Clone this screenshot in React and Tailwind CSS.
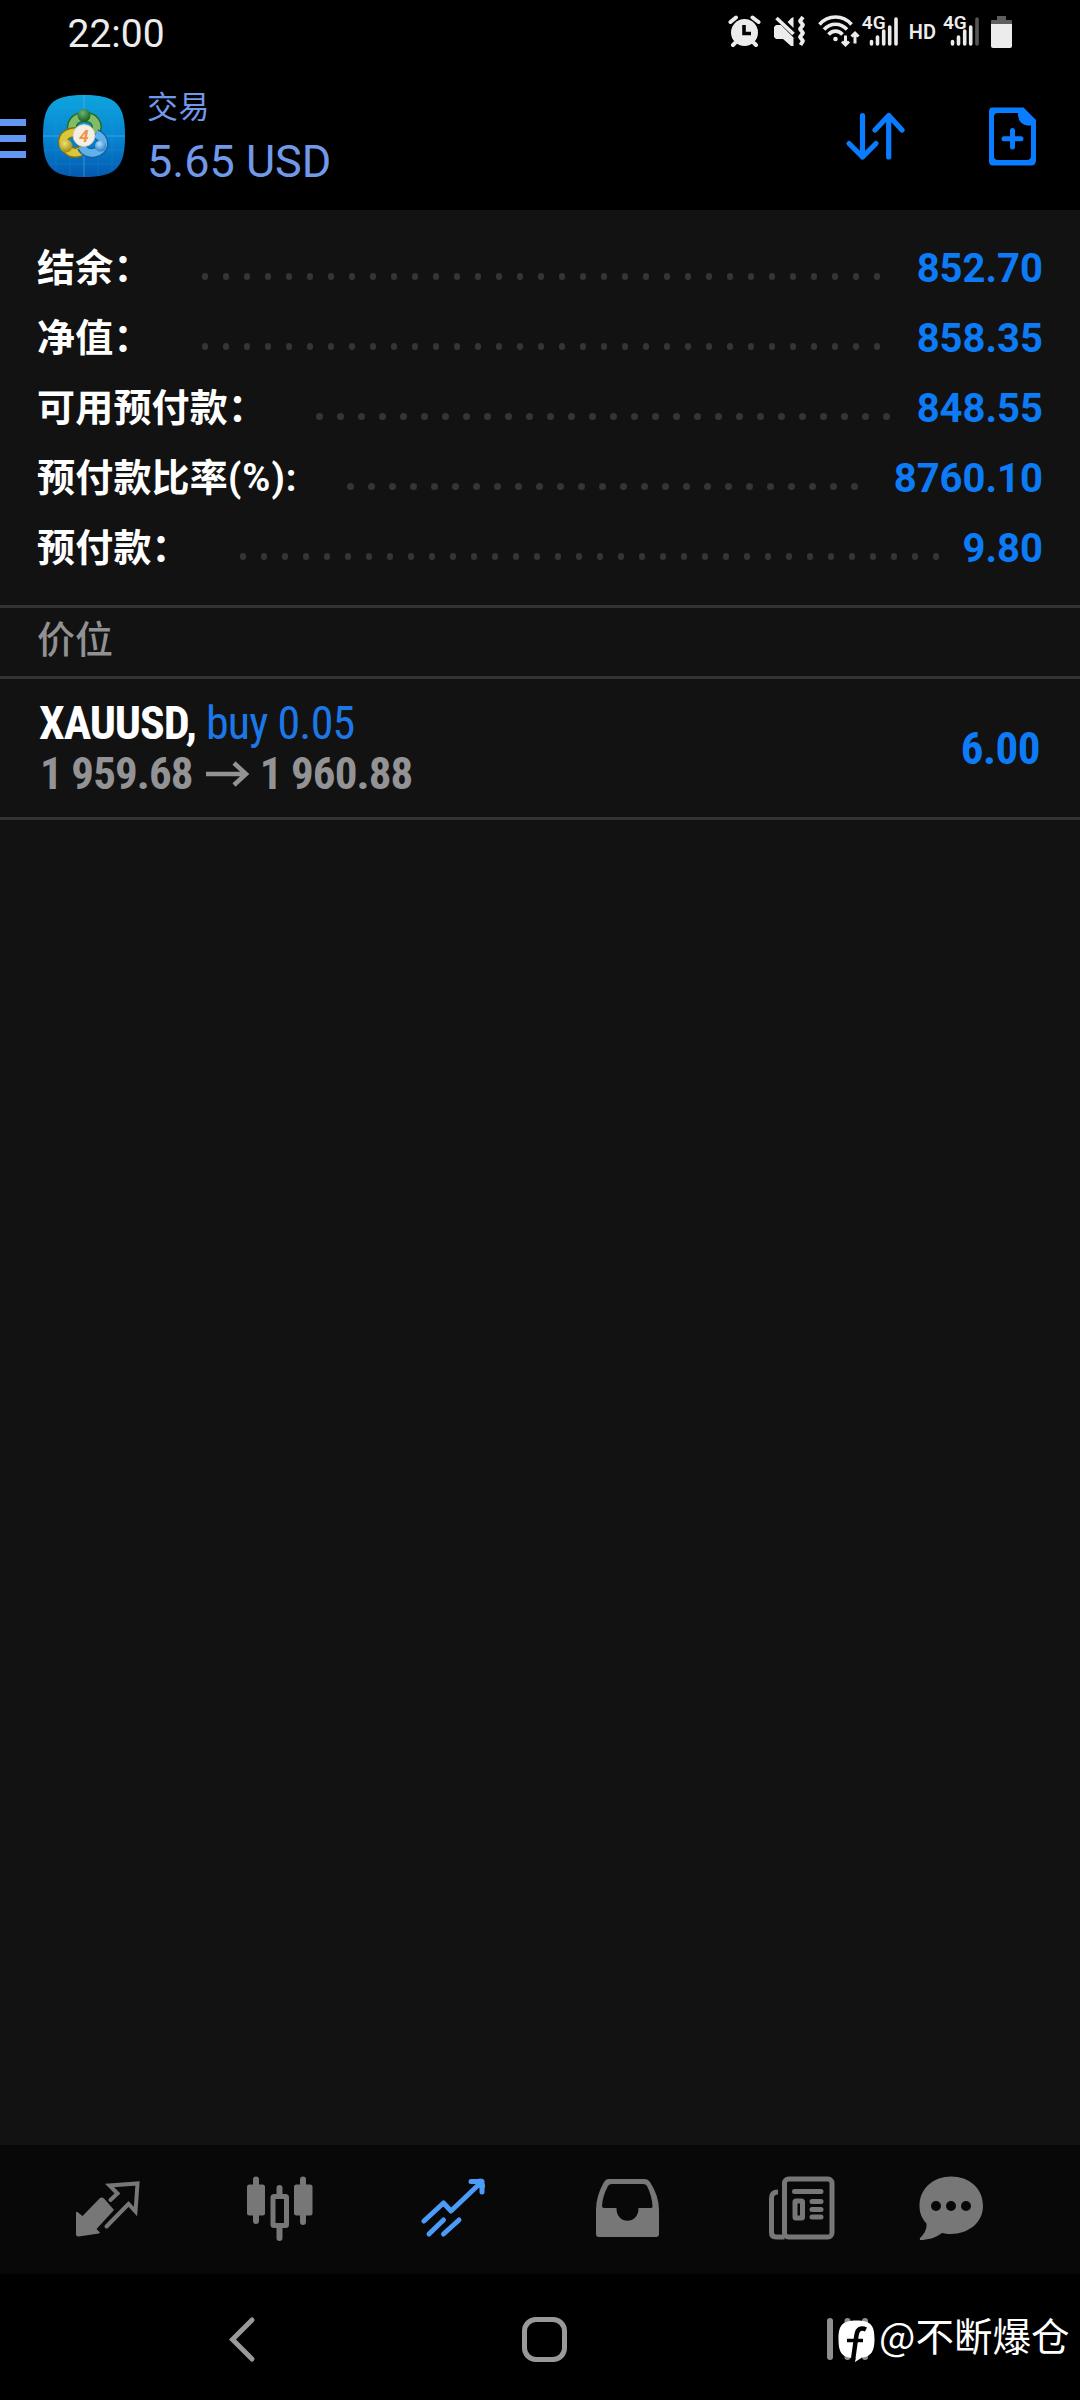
import React from 'react';

const cuentas = [
    { label: '结余：', value: '852.70', dots: 33 },
    { label: '净值：', value: '858.35', dots: 33 },
    { label: '可用预付款：', value: '848.55', dots: 28 },
    { label: '预付款比率', unidad: '(%):', value: '8760.10', dots: 25 },
    { label: '预付款：', value: '9.80', dots: 34 },
];

const AlarmIcon = () => (
    <svg width="34" height="34" viewBox="0 0 34 34" fill="#ececec">
        <path d="M2.500 8 L8 3.500 M24.500 3.500 L30.500 8 M7 29 L5 31 M26 29 L28 31" stroke="#ececec" strokeWidth="4" strokeLinecap="round" />
        <circle cx="16.500" cy="18.500" r="13.500" />
        <path d="M16 11 V19.500 H23" stroke="#000" strokeWidth="3.6" fill="none" />
    </svg>
);

const MuteIcon = () => (
    <svg width="32" height="34" viewBox="0 0 32 34" fill="#ececec">
        <path d="M0 13 L2 11 H7 L19.500 23.500 V32 H17 L9 25 H2 L0 23 Z" />
        <path d="M2.500 4 L19.500 20" stroke="#ececec" strokeWidth="3.6" />
        <path d="M13.500 8 L17.500 4 L19.500 3 V14 Z" />
        <path d="M29 3 L26 7 L29 11 L26 15 L29 19 L26 23 L29 27 L26.500 31" stroke="#ececec" strokeWidth="3.800" fill="none" strokeLinejoin="round" />
    </svg>
);

const WifiIcon = () => (
    <svg width="42" height="34" viewBox="0 0 42 34" fill="none" stroke="#ececec" strokeWidth="3.6">
        <path d="M1.500 10.500 C10 0.500 25 0.500 33.500 10.500" />
        <path d="M6 15.500 C12.500 8.500 22.500 8.500 29 15.500" />
        <path d="M10.500 20.500 C14.500 16 20.500 16 24.500 20.500" />
        <circle cx="17.500" cy="25" r="2.300" fill="#ececec" stroke="none" />
        <path d="M27.500 21.500 V31 M24 27.500 L27.500 31 L31 27.500 M37 29.500 V19 M33.500 22.500 L37 19 L40.500 22.500" strokeWidth="3" />
    </svg>
);

const SignalIcon = ({ weak }) => (
    <div className="relative h-[34px] w-[36px]">
        <svg width="36" height="34" viewBox="0 0 36 34" stroke="#ececec" strokeWidth="3.600" strokeLinecap="round">
            <path d="M9.500 27.500 V30 M15.500 23 V30 M21.700 17 V30 M27.700 13 V30" />
            <path d="M34 5 V30" className={weak ? 'stroke-[#555555]' : 'stroke-[#ececec]'} />
        </svg>
        <span className="absolute left-0 -top-[3px] text-[19px] font-semibold leading-[24px] text-[#ececec]">4G</span>
    </div>
);

const BatteryIcon = () => (
    <svg width="22" height="34" viewBox="0 0 22 34">
        <path d="M6 2 H15 V6 H20 Q21 6 21 7 V11 H0 V7 Q0 6 1 6 H6 Z" fill="#5e5e5e" />
        <path d="M0 10 H21 V32 Q21 34 19 34 H2 Q0 34 0 32 Z" fill="#ececec" />
    </svg>
);

const StatusBar = () => (
    <div className="flex h-[66px] items-start pl-[67.5px] pr-[67px]">
        <span className="mt-[11px] text-[39px] leading-[46px] text-[#ececec]">22:00</span>
        <div className="ml-auto flex items-start pt-[14px]">
            <AlarmIcon />
            <div className="ml-[12px]"><MuteIcon /></div>
            <div className="ml-[12px]"><WifiIcon /></div>
            <div className="ml-[2px]"><SignalIcon /></div>
            <span className="ml-[11px] mt-[6px] text-[20px] font-semibold leading-[24px] text-[#ececec]">HD</span>
            <div className="ml-[7px]"><SignalIcon weak /></div>
            <div className="ml-[12px]"><BatteryIcon /></div>
        </div>
    </div>
);

const Logo = () => (
    <svg width="84" height="84" viewBox="0 0 84 84">
        <defs>
            <linearGradient id="fondo" x1="0" y1="0" x2="0" y2="1">
                <stop offset="0" stopColor="#0ea4de" />
                <stop offset="0.5" stopColor="#0787d2" />
                <stop offset="1" stopColor="#0459b0" />
            </linearGradient>
            <radialGradient id="verde" cx="0.4" cy="0.3" r="0.7">
                <stop offset="0" stopColor="#6db56a" />
                <stop offset="1" stopColor="#175c22" />
            </radialGradient>
            <radialGradient id="amarillo" cx="0.4" cy="0.3" r="0.7">
                <stop offset="0" stopColor="#efe272" />
                <stop offset="1" stopColor="#a08a12" />
            </radialGradient>
            <radialGradient id="azul" cx="0.4" cy="0.3" r="0.7">
                <stop offset="0" stopColor="#b5e2fb" />
                <stop offset="1" stopColor="#2a80cc" />
            </radialGradient>
        </defs>
        <path d="M42 1 C74 1 83 10 83 42 C83 74 74 83 42 83 C10 83 1 74 1 42 C1 10 10 1 42 1 Z" fill="url(#fondo)" />
        <path d="M14 8 V76 M28 2 V82 M56 2 V82 M70 8 V76 M8 14 H76 M2 28 H82 M2 56 H82 M8 70 H76" stroke="#3aa3e4" strokeWidth="0.5" opacity="0.4" />
        <path d="M42 1 V83 M1 42 H83" stroke="#6cc0ee" strokeWidth="0.8" opacity="0.6" />
        <g fill="none">
            <path d="M32 39 C27 30 33 23 42.500 23 C52 23 57.500 30 53 39" stroke="#276b22" strokeWidth="10.500" />
            <path d="M32 39 C27 30 33 23 42.500 23 C52 23 57.500 30 53 39" stroke="#7fbd68" strokeWidth="7.500" />
            <path d="M34 38 C20 39 18 49 25 55 C30 60 36 60 42 55" stroke="#85700f" strokeWidth="10.500" />
            <path d="M34 38 C20 39 18 49 25 55 C30 60 36 60 42 55" stroke="#d9c73e" strokeWidth="7.500" />
            <path d="M54 40 C65 45 63 57 53 58.500 C47 60 42 57 40 53" stroke="#1a5f9f" strokeWidth="10.500" />
            <path d="M54 40 C65 45 63 57 53 58.500 C47 60 42 57 40 53" stroke="#5eb2ea" strokeWidth="7.500" />
        </g>
        <circle cx="42" cy="21.500" r="6.500" fill="url(#verde)" />
        <circle cx="24" cy="52" r="6.500" fill="url(#amarillo)" />
        <circle cx="58.500" cy="52" r="5.500" fill="url(#azul)" />
        <circle cx="42" cy="41.500" r="11" fill="#f3efe6" stroke="#c9c4b8" strokeWidth="0.8" />
        <text x="42" y="47.500" textAnchor="middle" fill="#ee9440" fontFamily="Roboto, sans-serif" fontSize="17" fontWeight="700" fontStyle="italic">4</text>
    </svg>
);

const Header = () => (
    <header className="flex h-[144px] items-start">
        <div className="mt-[53px] flex w-[26px] flex-col gap-[9px]">
            <div className="h-[7px] bg-[#6398f2]"></div>
            <div className="h-[7px] bg-[#6398f2]"></div>
            <div className="h-[7px] bg-[#6398f2]"></div>
        </div>
        <div className="ml-[16px] mt-[28px]"><Logo /></div>
        <div className="ml-[21px] mt-[19px] flex flex-col text-[#7199e9]">
            <span className="text-[31px] leading-[46px] tracking-[0.5px]">交易</span>
            <span className="mt-[4px] text-[45px] leading-[54px]">5.65 USD</span>
        </div>
        <div className="ml-auto flex pr-[42px] text-[#0a7cff]">
            <svg className="mt-[45px]" width="60" height="52" viewBox="0 0 60 52" fill="none" stroke="currentColor" strokeWidth="5.200" strokeLinecap="round" strokeLinejoin="round">
                <path d="M17.500 4.500 V46 M4 32.500 L17.500 46 L31 32.500" />
                <path d="M43.700 46 V4.500 M30 19 L43.700 4.500 L57 19" />
            </svg>
            <svg className="ml-[83px] mt-[40px]" width="50" height="60" viewBox="0 0 50 60">
                <path fill="currentColor" fillRule="evenodd" d="M4 1.500 H35.500 L48 14 V54 Q48 59.500 43 59.500 H5 Q1 59.500 1 55 V6 Q1 1.500 4 1.500 Z M10 7 Q6 7 6 11 V50 Q6 54 10 54 H38.500 Q43 54 43 50 V19.500 H40 Q31 18.500 30 9.500 V7 Z" />
                <path d="M24.500 24.500 V41 M16 32.800 H33" stroke="currentColor" strokeWidth="5" strokeLinecap="round" />
            </svg>
        </div>
    </header>
);

const Fila = ({ item }) => (
    <div className="flex h-[70px] items-center">
        <span className="mt-[2px] whitespace-nowrap text-[38px] font-bold leading-[56px] tracking-[0.2px] text-white">
            {item.label}
            {item.unidad && <span className="tracking-[1px]">{item.unidad}</span>}
        </span>
        <div className="ml-[50px] mt-[19px] flex gap-[14.5px]">
            {Array.from({ length: item.dots }, (_, i) => (
                <i key={i} className="h-[6.5px] w-[6.5px] rounded-full bg-[#353535]"></i>
            ))}
        </div>
        <span className="ml-auto mt-[3px] text-[40px] font-bold leading-[56px] text-[#0d7bf5]">{item.value}</span>
    </div>
);

const Posicion = () => (
    <div className="flex h-[141px] border-b-[3px] border-[#333333] pl-[39px] pr-[40px] [font-stretch:75%]">
        <div className="pt-[17px]">
            <div className="flex h-[54px] items-center whitespace-nowrap text-[46px]">
                <b className="tracking-[-1.1px] text-white">XAUUSD,</b>
                <span className="ml-[10px] tracking-[-0.8px] text-[#1c78e6]">buy 0.05</span>
            </div>
            <div className="-mt-[3px] ml-px flex h-[54px] items-center whitespace-nowrap text-[45px] font-bold tracking-[-0.9px] text-[#939395]">
                <span>1 959.68</span>
                <svg className="ml-[13px] mr-[10px]" width="44" height="26" viewBox="0 0 44 26" fill="none" stroke="currentColor" strokeWidth="4.500">
                    <path d="M0 13 H41 M28 2 L40 13 L28 24" />
                </svg>
                <span>1 960.88</span>
            </div>
        </div>
        <span className="ml-auto mt-[43px] text-[45px] font-bold leading-[54px] tracking-[-0.5px] text-[#0d7bf5]">6.00</span>
    </div>
);

const TabBar = () => (
    <nav className="flex h-[129px] gap-[105px] bg-[#080808] pl-[75px] pt-[31px] text-[#777777]">
        {/* Cotizaciones */}
        <svg width="68" height="68" viewBox="0 0 68 68">
            <path d="M1 36.500 Q1.500 35 3 36.500 L7.500 40 L24.500 22.500 Q26.700 20.500 29 22.500 L39 34 L21.500 53 L25 56.500 L24 57.500 L3.500 60.500 Q1 60.500 1 58 Z" fill="currentColor" />
            <path d="M35.500 24 L42.500 17.500 L34.500 9.500 L62.500 7.500 L60.500 35.500 L53.500 28 L31.500 50.500" fill="none" stroke="currentColor" strokeWidth="4" strokeLinecap="round" />
        </svg>
        {/* Gráfico */}
        <svg className="-ml-px mr-px" width="68" height="68" viewBox="0 0 68 68">
            <path d="M9 3.500 V45 M56 3.500 V46 M32.500 12 V22 M32.500 50 V62" stroke="currentColor" strokeWidth="6" strokeLinecap="round" />
            <rect x="0" y="8.500" width="18" height="31" rx="2.500" fill="currentColor" />
            <rect x="47" y="8.500" width="18.500" height="31" rx="2.500" fill="currentColor" />
            <rect x="26" y="20.500" width="13.500" height="29" rx="1" fill="#080808" stroke="currentColor" strokeWidth="5" />
        </svg>
        {/* Comercio */}
        <svg className="text-[#4b9bf8]" width="68" height="68" viewBox="0 0 68 68" fill="none" stroke="currentColor" strokeWidth="5" strokeLinecap="round" strokeLinejoin="round">
            <path d="M3 45 L22.500 27 L30 35 L61 5.500 M50 5.500 H61 V16" />
            <path d="M59 5.500 L61 10" strokeWidth="6" />
            <path d="M8 58 L22.500 44 M22.500 58 L38 44" />
        </svg>
        {/* Historial */}
        <svg width="68" height="68" viewBox="0 0 68 68">
            <path fill="currentColor" fillRule="evenodd" d="M14 3 H51 Q54 3 56 6 Q65 20 65 34 V58 Q65 61 62 61 H5 Q2 61 2 58 V34 Q2 20 10 6 Q12 3 14 3 Z M18 8 Q15 8 14 10 Q8.500 20 8 30 Q8 32 10 32 H22.500 C22 49 45 49 44.500 32 H57 Q59 32 58.500 30 Q58 20 53 10 Q52 8 49 8 Z" />
        </svg>
        {/* Noticias */}
        <svg width="68" height="68" viewBox="0 0 68 68" fill="none" stroke="currentColor" strokeWidth="5">
            <rect x="17.500" y="3" width="47.500" height="58" rx="4" />
            <path d="M17.500 61 H9 Q4.500 61 4.500 56.500 V22 Q4.500 16 11 16" />
            <path d="M27.500 15.500 H54 M45 25.500 H54 M45 33.500 H54 M45 41 H54" strokeLinecap="round" />
            <rect x="28" y="25" width="7.500" height="17" rx="1" />
        </svg>
        {/* Mensajes */}
        <svg className="-ml-[22px]" width="68" height="68" viewBox="0 0 68 68">
            <path fill="currentColor" d="M33 0.500 C51 0.500 65 12 65 30 C65 47 50 58 33 58 C29 58 26.500 57.500 24 57 C17 62 10 64 2 64 Q1 62 3 61 C7 57 9 52 8.500 47.500 C4 43 1.500 37 1.500 30 C1.500 12 16 0.500 33 0.500 Z" />
            <g fill="#080808">
                <circle cx="18" cy="30" r="5" />
                <circle cx="33" cy="30" r="5" />
                <circle cx="48" cy="30" r="5" />
            </g>
        </svg>
    </nav>
);

const SystemNav = () => (
    <div className="flex h-[126px] items-start bg-black pt-[42px]">
        <svg className="ml-[227px]" width="30" height="48" viewBox="0 0 30 48" fill="none" stroke="#999999" strokeWidth="5" strokeLinecap="round">
            <path d="M25 4 L5.500 23.500 L25 43" />
        </svg>
        <div className="ml-[265px] mt-px h-[45px] w-[45px] rounded-[14px] border-[5.500px] border-[#999999]"></div>
        <div className="relative ml-[260px] h-[48px] w-[48px]">
            <svg width="48" height="48" viewBox="0 0 48 48" stroke="#8f8f8f" strokeWidth="6" strokeLinecap="round">
                <path d="M3 5 V41 M20.500 5 V41 M38 5 V41" />
            </svg>
            <svg className="absolute left-[11px] top-[4px]" width="38" height="44" viewBox="0 0 38 44">
                <path d="M18.500 0.500 C32.500 0.500 36.500 5 36.500 19 C36.500 31 33.500 36.500 24 37.500 L17 42 L17.500 38 C4 38 0.500 33 0.500 19 C0.500 5 4.500 0.500 18.500 0.500 Z" fill="#ffffff" />
                <path d="M28 9.500 C23 7 19.500 9 18.500 15 L15 40" fill="none" stroke="#000000" strokeWidth="4.500" />
                <path d="M9 20.500 H25" stroke="#000000" strokeWidth="3.500" />
            </svg>
        </div>
        <span className="ml-[4px] -mt-[9px] whitespace-nowrap text-[38.5px] leading-[54px] text-white font-['Noto_Sans_CJK_SC',sans-serif]">@不断爆仓</span>
    </div>
);

const App = () => {
    return (
        <div className="flex h-[2400px] w-[1080px] flex-col overflow-hidden bg-black font-[Roboto,'Noto_Sans_CJK_SC',sans-serif]">
            <StatusBar />
            <Header />
            <main className="flex-1 bg-[#121212]">
                <section className="h-[395px] px-[37px] pt-[22px]">
                    {cuentas.map((item) => (
                        <Fila key={item.label} item={item} />
                    ))}
                </section>
                <div className="h-[74px] border-y-[3px] border-[#333333] px-[37px] text-[38px] font-medium leading-[65px] text-[#919193]">价位</div>
                <Posicion />
            </main>
            <TabBar />
            <SystemNav />
        </div>
    );
};

export default App;
